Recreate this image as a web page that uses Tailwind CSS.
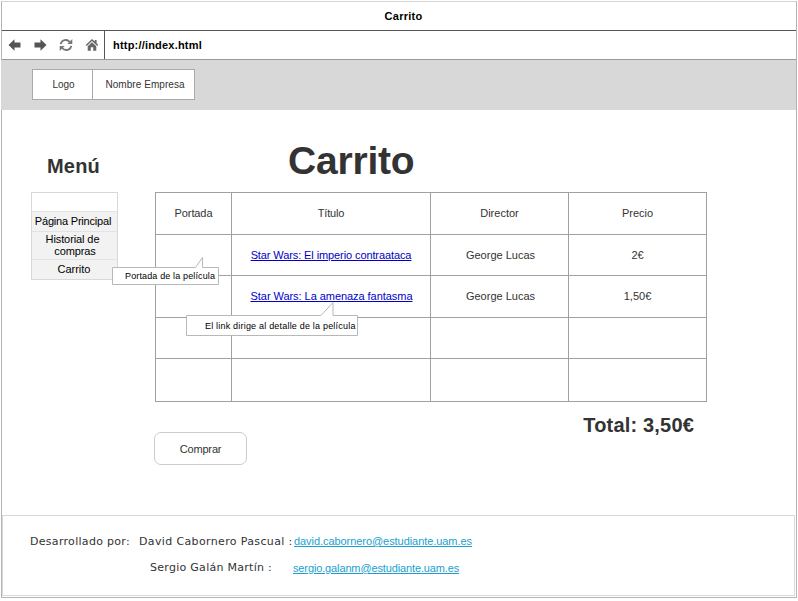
<!DOCTYPE html>
<html lang="es">
<head>
<meta charset="utf-8">
<title>Carrito</title>
<script src="https://cdn.jsdelivr.net/npm/@tailwindcss/browser@4"></script>
</head>
<body class="bg-white w-[798px] h-[601px] overflow-hidden pt-px pl-px font-['Liberation_Sans',Arial,sans-serif] text-[11px] leading-[14px] text-[#333]">
<div class="relative flex flex-col w-[796px] h-[597px] border border-[#b4b4b4] border-t-[#d4d4d4]">
  <div class="h-[29px] shrink-0 flex items-center justify-center pl-[9px] border-b border-[#555] font-bold text-black"><span class="tracking-[0.25px]">Carrito</span></div>
  <nav class="h-[29px] shrink-0 flex border-b border-[#999]">
    <div class="w-[103px] flex items-center border-r border-[#555] pl-[6px] gap-[12px] text-[#555]">
      <svg class="w-[14px] h-[14px]" viewBox="0 0 14 14" fill="currentColor"><path d="M.5 7 6.5 1.2V4.600H12.500V9.400H6.500V12.800Z"/></svg>
      <svg class="w-[14px] h-[14px] -ml-px" viewBox="0 0 14 14" fill="currentColor"><path d="M13.500 7 7.500 1.200V4.600H1.500V9.400H7.500V12.800Z"/></svg>
      <svg class="w-[14px] h-[14px] text-[#777]" viewBox="0 0 14 14" fill="none" stroke="currentColor" stroke-width="1.8"><path d="M1.8 6.2C2.4 1.8 8 .6 10.8 4M12.2 7.8C11.600 12.200 6 13.400 3.200 10"/><path fill="currentColor" stroke="none" d="M13.300 1V6H8.300ZM.7 13V8H5.700Z"/></svg>
      <svg class="w-[14px] h-[14px] text-[#666]" viewBox="0 0 14 14" fill="currentColor"><path d="M7 1 .7 7 1.700 8 7 3.100 12.300 8 13.300 7 11.600 5.300V2H9.800V3.600Z"/><path d="M7 4.200 2.700 8.200V12.800H5.800V9.300H8.200V12.800H11.300V8.200Z"/></svg>
    </div>
    <div class="flex items-center pl-[8px] font-bold text-black"><span class="tracking-[0.2px]">http://index.html</span></div>
  </nav>
  <header class="h-[50px] ml-[-1px] shrink-0 bg-[#d8d8d8] pl-[31px] pt-[9px]">
    <div class="flex w-[163px] h-[31px] border border-[#aaa] bg-white text-[10px]">
      <div class="w-[60px] flex items-center justify-center pl-[2px] border-r border-[#aaa]"><span>Logo</span></div>
      <div class="flex-1 flex items-center justify-center pl-[3px]"><span class="tracking-[0.06px]">Nombre Empresa</span></div>
    </div>
  </header>
  <main class="relative h-[405px] shrink-0 flex pl-[29px]">
    <aside class="w-[87px] shrink-0 text-center text-black">
      <h2 class="h-[82px] pt-[44px] pr-[2px] text-[20px] leading-[24px] font-bold text-[#333] tracking-[0.2px]">Menú</h2>
      <ul class="border border-[#d8d8d8] leading-[12px] bg-[#f2f2f2]">
        <li class="h-[18px] bg-white"></li>
        <li class="h-[20px] border-t border-[#e2e2e2] pt-[3px] -mx-px whitespace-nowrap pr-[3px] tracking-[-0.2px]">Página Principal</li>
        <li class="h-[28px] border-t border-[#e2e2e2] pt-px pr-[4px] tracking-[-0.1px]">Historial de<br><span class="pl-[5px]">compras</span></li>
        <li class="h-[20px] border-t border-[#e2e2e2] pt-[3px] pr-px">Carrito</li>
      </ul>
    </aside>
    <section class="pl-[37px] w-[589px]">
      <h1 class="h-[82px] pt-[28px] pl-[133px] text-[39px] leading-[46px] font-bold tracking-[-0.2px]">Carrito</h1>
      <table class="w-[552px] h-[210px] table-fixed border-collapse border border-[#a0a0a0] text-center">
        <colgroup><col class="w-[76px]"><col class="w-[199px]"><col class="w-[138px]"><col class="w-[138px]"></colgroup>
        <tbody class="[&_td]:border [&_td]:border-[#a0a0a0] [&_td]:p-0 [&_th]:border [&_th]:border-[#a0a0a0] [&_th]:p-0 [&_th]:pb-[2px] [&_th]:font-normal">
          <tr class="h-[42px]"><th class="tracking-[-0.1px]">Portada</th><th class="tracking-[-0.15px]">Título</th><th>Director</th><th>Precio</th></tr>
          <tr class="h-[41px]"><td></td><td><a href="#" class="text-[#0000c8] underline tracking-[-0.1px]">Star Wars: El imperio contraataca</a></td><td><span class="pl-[2px]">George Lucas</span></td><td>2€</td></tr>
          <tr class="h-[42px] [&>td]:pb-[2px]"><td></td><td><a href="#" class="text-[#0000c8] underline pl-px tracking-[-0.05px]">Star Wars: La amenaza fantasma</a></td><td><span class="pl-[2px]">George Lucas</span></td><td>1,50€</td></tr>
          <tr class="h-[41px]"><td></td><td></td><td></td><td></td></tr>
          <tr class="h-[43px]"><td></td><td></td><td></td><td></td></tr>
        </tbody>
      </table>
      <div class="flex justify-between">
        <button class="mt-[30px] -ml-px w-[93px] h-[33px] rounded-[7px] border border-[#ccc] bg-white tracking-[-0.15px]">Comprar</button>
        <p class="mt-[11px] mr-[13px] text-[20px] leading-[24px] font-bold tracking-[0.18px]">Total: 3,50€</p>
      </div>
    </section>
    <div class="absolute left-[110px] top-[147px] w-[107px] h-[27px]">
      <svg class="absolute inset-0" width="107" height="28" viewBox="0 0 107 28" fill="#fff" stroke="#b8b8b8"><path d="M.5 10.500H83.500L90.500 .5V10.500H106.500V27.500H.5Z"/></svg>
      <span class="absolute left-[13px] top-[12px] text-[9px] tracking-[0.14px] text-black whitespace-nowrap">Portada de la película</span>
    </div>
    <div class="absolute left-[184px] top-[192px] w-[172px] h-[34px]">
      <svg class="absolute inset-0" width="172" height="34" viewBox="0 0 172 34" fill="#fff" stroke="#b8b8b8"><path d="M.5 13.500H135L147 .5V13.500H171.500V33.500H.5Z"/></svg>
      <span class="absolute left-[19px] top-[17px] text-[9px] tracking-[0.2px] text-black whitespace-nowrap">El link dirige al detalle de la película</span>
    </div>
  </main>
  <footer class="w-[793px] h-[81px] border border-[#d8d8d8] pt-[18px] pl-[27px] font-['DejaVu_Sans',Verdana,sans-serif] text-[11px]">
    <div class="flex h-[26px] leading-[16px]"><span class="w-[109px] tracking-[0.3px]">Desarrollado por:</span><span class="w-[155px] whitespace-nowrap tracking-[0.36px]">David Cabornero Pascual :</span><a href="#" class="-mt-px font-['Liberation_Sans',Arial,sans-serif] text-[#1a9fd0] underline tracking-[-0.06px]">david.cabornero@estudiante.uam.es</a></div>
    <div class="flex leading-[16px] pl-[120px]"><span class="w-[143px] tracking-[0.28px]">Sergio Galán Martín :</span><a href="#" class="font-['Liberation_Sans',Arial,sans-serif] text-[#1a9fd0] underline tracking-[-0.13px]">sergio.galanm@estudiante.uam.es</a></div>
  </footer>
</div>
</body>
</html>
